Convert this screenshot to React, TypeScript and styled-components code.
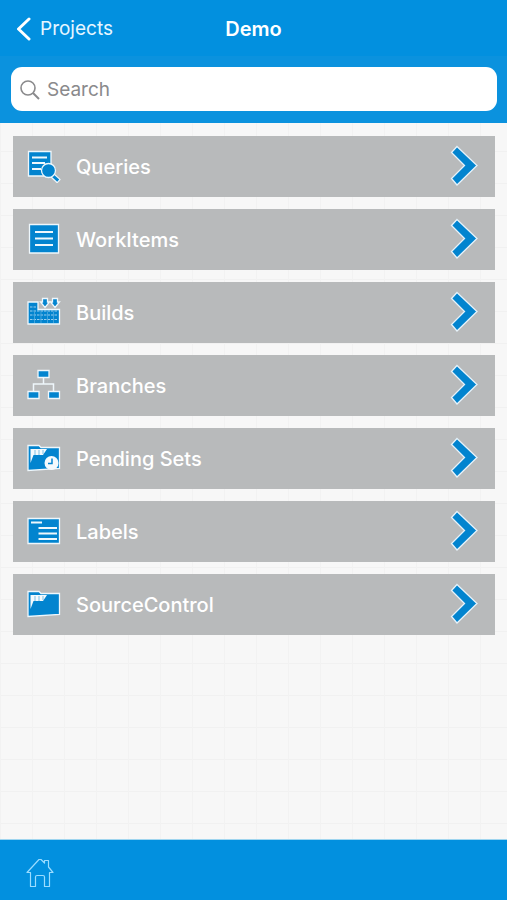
import React from "react";
import styled, { createGlobalStyle } from "styled-components";

const blue = "#0284cf";
const edge = "#eef7fc";

const GlobalStyle = createGlobalStyle`
  *, *::before, *::after { box-sizing: border-box; }
  body {
    margin: 0;
    font-family: Inter, "Liberation Sans", sans-serif;
    -webkit-font-smoothing: antialiased;
  }
  button, input { font-family: inherit; }
`;

const Screen = styled.div`
  display: flex;
  flex-direction: column;
  min-height: 100vh;
  background: #f7f7f7;
`;

const NavBar = styled.header`
  display: grid;
  grid-template-columns: 1fr auto 1fr;
  align-items: center;
  height: 56px;
  padding: 1px 16px 0;
  background: #0290df;
  color: #fff;
`;

const BackButton = styled.button`
  display: flex;
  align-items: center;
  gap: 9px;
  justify-self: start;
  padding: 0;
  border: 0;
  background: none;
  color: #e6f6ff;
  font-size: 19px;
  line-height: 24px;
  cursor: pointer;
`;

const Title = styled.h1`
  margin: 0;
  font-size: 20px;
  line-height: 24px;
  font-weight: 600;
`;

const SearchBar = styled.div`
  padding: 11px 10px 12px 11px;
  background: #0b92de;
`;

const SearchField = styled.label`
  display: flex;
  align-items: center;
  gap: 7px;
  height: 44px;
  padding: 1px 9px 0;
  border-radius: 11px;
  background: #fff;
`;

const SearchInput = styled.input`
  flex: 1;
  min-width: 0;
  padding: 0;
  border: 0;
  outline: 0;
  background: none;
  color: #333;
  font-size: 19px;
  line-height: 24px;
  &::placeholder { color: #8a8a8c; opacity: 1; }
`;

const Content = styled.main`
  flex: 1;
  padding: 13px 12px 12px 13px;
  background-color: #f7f7f7;
  background-image:
    linear-gradient(to right, #f2f2f2 1px, transparent 1px),
    linear-gradient(to bottom, #f1f1f1 1px, transparent 1px);
  background-size: 32px 32px;
  background-position: 0 28px;
`;

const Menu = styled.ul`
  display: flex;
  flex-direction: column;
  gap: 12px;
  margin: 0;
  padding: 0;
  list-style: none;
`;

const MenuRow = styled.button`
  display: flex;
  align-items: center;
  gap: 15px;
  width: 100%;
  height: 61px;
  padding: 0 17px 1px 14px;
  border: 0;
  background: #b8babb;
  color: #fff;
  text-align: left;
  cursor: pointer;
`;

const RowLabel = styled.span`
  flex: 1;
  padding-top: 2px;
  font-size: 20px;
  line-height: 24px;
  font-weight: 500;
`;

const Toolbar = styled.footer`
  display: flex;
  align-items: center;
  height: 61px;
  padding: 4px 24px 0;
  border-top: 1px solid #9fd5ef;
  background: #0290df;
`;

const HomeButton = styled.button`
  display: flex;
  padding: 0;
  border: 0;
  background: none;
  cursor: pointer;
`;

const Glyph = styled.svg`
  display: block;
  flex: none;
`;

const RowIcon = ({ children }: { children: React.ReactNode }) => (
  <Glyph width="34" height="34" viewBox="0 0 34 34" aria-hidden="true">
    {children}
  </Glyph>
);

const outlined = { fill: blue, stroke: edge, strokeWidth: 1.3 };
const line = { stroke: edge, strokeWidth: 2, fill: "none" };

const QueriesIcon = () => (
  <RowIcon>
    <path d="M1.5 2.5H24V27H1.5Z" {...outlined} />
    <path d="M5 8.5H20M5 14H18M5 20H14" {...line} />
    <path d="M25 26L32 32.5" stroke={edge} strokeWidth="5.4" />
    <path d="M24.5 25.5L31.2 31.7" stroke={blue} strokeWidth="3" />
    <circle cx="21.5" cy="21.5" r="7" {...outlined} />
  </RowIcon>
);

const WorkItemsIcon = () => (
  <RowIcon>
    <path d="M2.5 2.5H31.5V31H2.5Z" {...outlined} />
    <path d="M8 10H26M8 16.5H26M8 23H26" {...line} />
  </RowIcon>
);

const BuildsIcon = () => (
  <RowIcon>
    <path d="M1 7H11V14.5H32.5V29H1Z" {...outlined} />
    <path
      d="M3 12H10.500M3 16H31M3 20H31M3 24.5H31"
      stroke="#a9d6f0"
      strokeWidth="0.9"
      strokeDasharray="2.5 1"
    />
    <path d="M7.5 17V28M14 17V28M20.500 17V28M26.500 17V28" stroke="#4fabdf" strokeWidth="0.8" />
    <path d="M15.500 3.500H20.500V7H22.500L18 12.500L13.500 7H15.500Z" {...outlined} />
    <path d="M25.500 3.500H30.500V7H32.500L28 12.500L23.500 7H25.500Z" {...outlined} />
  </RowIcon>
);

const BranchesIcon = () => (
  <RowIcon>
    <path d="M16.5 9V16M6.5 23V16H26.5V23" stroke={edge} strokeWidth="1.5" fill="none" />
    <path d="M11 2.5H22V9.5H11Z" {...outlined} />
    <path d="M1 23.5H12V30.5H1Z" {...outlined} />
    <path d="M21.5 23.5H32.5V30.5H21.5Z" {...outlined} />
  </RowIcon>
);

const FolderShape = () => (
  <>
    <path d="M1 4.5H12L14 6.5H32.5V27.5L1 29.5Z" {...outlined} />
    <path d="M3.5 8H20L16 14H6.5L3.5 22Z" fill="#f4fafd" />
    <path d="M8 9V14M12 9V14M16 9V13" stroke={blue} strokeWidth="0.7" opacity="0.7" />
  </>
);

const PendingSetsIcon = () => (
  <RowIcon>
    <FolderShape />
    <circle cx="24.5" cy="22" r="7" fill="#f4fafd" />
    <path d="M25 17.5V22.5H21" stroke={blue} strokeWidth="1.5" fill="none" />
  </RowIcon>
);

const LabelsIcon = () => (
  <RowIcon>
    <path d="M1 4.5H32.5V29.5H1Z" {...outlined} />
    <path d="M4 8.500H15M11.500 14H30M11.500 19.500H30M11.500 25H30" {...line} />
  </RowIcon>
);

const SourceControlIcon = () => (
  <RowIcon>
    <FolderShape />
  </RowIcon>
);

const RowArrow = () => (
  <Glyph width="28" height="42" viewBox="0 0 28 42" aria-hidden="true">
    <path
      d="M7 1.5L27 20.500L7 40L1.5 33.500L14.500 20.500L1.500 7.5Z"
      fill={blue}
      stroke="#e6f3fb"
      strokeWidth="1.3"
    />
  </Glyph>
);

const items = [
  { label: "Queries", Icon: QueriesIcon },
  { label: "WorkItems", Icon: WorkItemsIcon },
  { label: "Builds", Icon: BuildsIcon },
  { label: "Branches", Icon: BranchesIcon },
  { label: "Pending Sets", Icon: PendingSetsIcon },
  { label: "Labels", Icon: LabelsIcon },
  { label: "SourceControl", Icon: SourceControlIcon },
];

export default function App() {
  return (
    <Screen>
      <GlobalStyle />
      <NavBar>
        <BackButton type="button">
          <Glyph width="15" height="24" viewBox="0 0 15 24" aria-hidden="true">
            <path
              d="M13 2L2.5 12L13 22"
              fill="none"
              stroke="#fff"
              strokeWidth="3"
              strokeLinecap="round"
              strokeLinejoin="round"
            />
          </Glyph>
          Projects
        </BackButton>
        <Title>Demo</Title>
      </NavBar>
      <SearchBar>
        <SearchField>
          <Glyph width="20" height="20" viewBox="0 0 20 20" aria-hidden="true">
            <circle cx="8" cy="8" r="7" fill="none" stroke="#8a8a8c" strokeWidth="1.6" />
            <path d="M13 13L19 19" stroke="#8a8a8c" strokeWidth="2" />
          </Glyph>
          <SearchInput type="search" placeholder="Search" aria-label="Search" />
        </SearchField>
      </SearchBar>
      <Content>
        <Menu>
          {items.map(({ label, Icon }) => (
            <li key={label}>
              <MenuRow type="button">
                <Icon />
                <RowLabel>{label}</RowLabel>
                <RowArrow />
              </MenuRow>
            </li>
          ))}
        </Menu>
      </Content>
      <Toolbar>
        <HomeButton type="button" aria-label="Home">
          <Glyph width="32" height="32" viewBox="0 0 32 32" aria-hidden="true">
            <path
              d="M3 16.5L15 3.5H17L20.5 7V4.5H24.5V11L29 16.5H25.5V30.5H20.5V21Q20.5 19.5 19 19.5H13Q11.5 19.5 11.5 21V30.5H6.5V16.5Z"
              fill="none"
              stroke="#9bdcff"
              strokeWidth="1.2"
              strokeLinejoin="round"
            />
          </Glyph>
        </HomeButton>
      </Toolbar>
    </Screen>
  );
}
